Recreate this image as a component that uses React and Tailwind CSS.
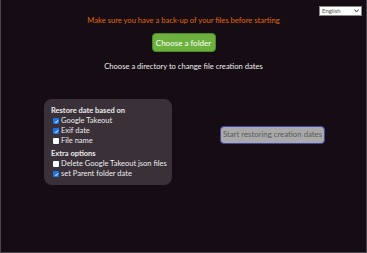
import React from "react";

function Check({ checked, label }) {
  return (
    <label className="flex items-center gap-[2px] h-[10px] pl-[2px] whitespace-nowrap">
      <span
        className={
          "w-[6px] h-[6px] flex items-center justify-center rounded-[1px] shrink-0 " +
          (checked ? "bg-[#1a73e8]" : "bg-white")
        }
      >
        {checked && (
          <svg width="5" height="5" viewBox="0 0 10 10">
            <path d="M2 5.5 L4 7.5 L8 2.5" stroke="white" strokeWidth="2" fill="none" />
          </svg>
        )}
      </span>
      <span>{label}</span>
    </label>
  );
}

export default function App() {
  return (
    <div className="w-[367px] h-[253px] bg-[#160d14] border border-[#4a454c] border-t-0 relative text-[#ececec] font-['Lato',sans-serif] overflow-hidden">
      <div className="absolute right-[4px] top-[6px] w-[43px] h-[10px] bg-white border border-[#888] flex items-center justify-between px-[2px] text-[6px] text-[#555] leading-none">
        <span>English</span>
        <svg width="5" height="4" viewBox="0 0 10 8">
          <path d="M1 1 L5 6 L9 1" stroke="#333" strokeWidth="2" fill="none" />
        </svg>
      </div>
      <div className="flex flex-col items-center pt-[15px]">
        <div className="text-[7.6px] leading-[10px] text-[#e0660f] whitespace-nowrap">
          Make sure you have a back-up of your files before starting
        </div>
        <button className="mt-[8px] h-[19px] w-[64px] bg-[#6cb13e] border border-[#4f8a2a] rounded-[4px] text-white text-[8px] leading-none whitespace-nowrap">
          Choose a folder
        </button>
        <div className="mt-[9px] text-[7.6px] leading-[10px] whitespace-nowrap">
          Choose a directory to change file creation dates
        </div>
      </div>
      <div className="flex items-start mt-[28px] pl-[43px]">
        <div className="w-[128px] h-[86px] bg-[#3a3038] rounded-[8px] pt-[7px] pl-[7px] text-[7.5px] leading-[10px]">
          <div className="font-bold">Restore date based on</div>
          <Check checked label="Google Takeout" />
          <Check checked label="Exif date" />
          <Check label="File name" />
          <div className="font-bold mt-[3px]">Extra options</div>
          <Check label="Delete Google Takeout json files" />
          <Check checked label="set Parent folder date" />
        </div>
        <button className="ml-[48px] mt-[27px] w-[105px] h-[18px] bg-[#a9a9a9] border border-[#3b48a8] rounded-[4px] text-[#5a5a5a] text-[7.8px] leading-none whitespace-nowrap">
          Start restoring creation dates
        </button>
      </div>
    </div>
  );
}
